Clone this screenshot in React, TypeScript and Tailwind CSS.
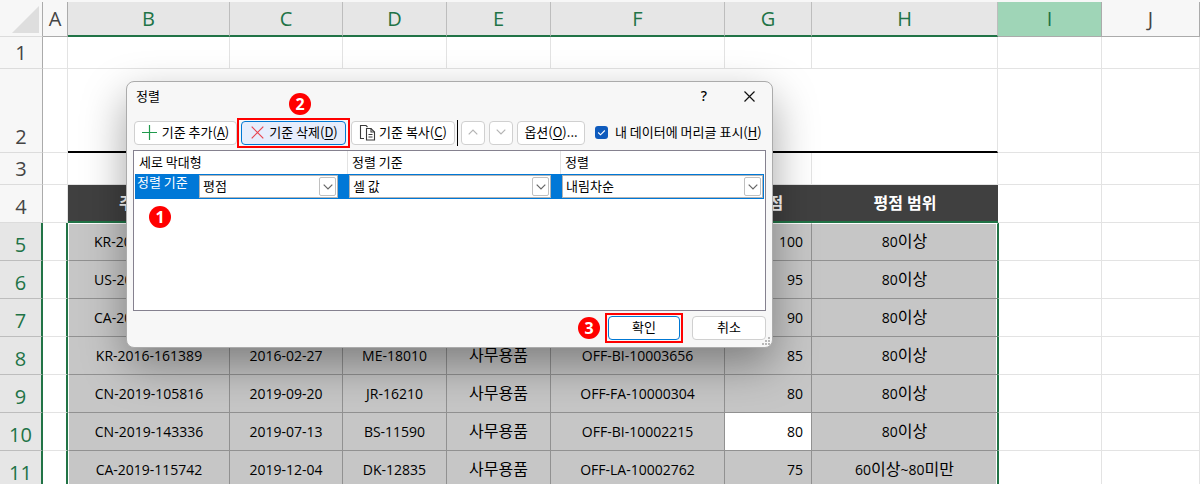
import { ReactNode } from "react";

type Row = {
  n: number;
  order: string;
  date?: string;
  customer?: string;
  category?: string;
  product?: string;
  score: string;
  range: string;
  active?: boolean;
};

const rows: Row[] = [
  { n: 5, order: "KR-20", score: "100", range: "80이상" },
  { n: 6, order: "US-20", score: "95", range: "80이상" },
  { n: 7, order: "CA-20", score: "90", range: "80이상" },
  { n: 8, order: "KR-2016-161389", date: "2016-02-27", customer: "ME-18010", category: "사무용품", product: "OFF-BI-10003656", score: "85", range: "80이상" },
  { n: 9, order: "CN-2019-105816", date: "2019-09-20", customer: "JR-16210", category: "사무용품", product: "OFF-FA-10000304", score: "80", range: "80이상" },
  { n: 10, order: "CN-2019-143336", date: "2019-07-13", customer: "BS-11590", category: "사무용품", product: "OFF-BI-10002215", score: "80", range: "80이상", active: true },
  { n: 11, order: "CA-2019-115742", date: "2019-12-04", customer: "DK-12835", category: "사무용품", product: "OFF-LA-10002762", score: "75", range: "60이상~80미만" },
];

/* Hangul runs are set larger than Latin runs so both scripts look even. */
function Mixed({ text }: { text?: string }) {
  const runs = (text ?? "").match(/[가-힣]+|[^가-힣]+/g) ?? [];
  return (
    <>
      {runs.map((run, i) => (
        <span key={i} className={/[가-힣]/.test(run) ? "text-base leading-5" : "text-sm leading-5"}>
          {run}
        </span>
      ))}
    </>
  );
}

function ColumnHead({ children, tone }: { children: ReactNode; tone: "plain" | "selected" | "hover" }) {
  const tones = {
    plain: "border-b border-[#ababab] bg-[#f7f7f7] text-[#444]",
    selected: "border-b-2 border-b-[#217346] border-r-[#bdbdbd] bg-[#e6e6e6] text-[#217346]",
    hover: "border-b border-[#ababab] bg-[#9fd5b7] text-[#217346]",
  };
  return <th scope="col" className={`h-[35px] border-r p-0 text-xl leading-6 font-normal ${tones[tone]}`}>{children}</th>;
}

function RowHead({ n, selected }: { n: number; selected?: boolean }) {
  return (
    <th
      scope="row"
      className={`border-b p-0 pb-[5px] align-bottom text-xl leading-5 font-normal ${
        selected
          ? "border-r-2 border-r-[#217346] border-b-[#bdbdbd] bg-[#e6e6e6] text-[#217346]"
          : "border-r border-r-[#ababab] border-b-[#dcdcdc] bg-[#f7f7f7] text-[#444]"
      }`}
    >
      {n}
    </th>
  );
}

const blank = "border-r border-b border-[#e3e3e3] p-0";

function Sheet() {
  return (
    <table className="w-full table-fixed border-separate border-spacing-0 border-t-2 border-[#f7f7f7] bg-white">
      <colgroup>
        <col className="w-[43px]" />
        <col className="w-[25px]" />
        <col className="w-[162px]" />
        <col className="w-[113px]" />
        <col className="w-[104px]" />
        <col className="w-[104px]" />
        <col className="w-[174px]" />
        <col className="w-[87px]" />
        <col className="w-[186px]" />
        <col className="w-[104px]" />
        <col />
      </colgroup>
      <thead>
        <tr>
          <td className="border-r border-b border-r-[#ababab] border-b-[#dcdcdc] bg-[#f7f7f7] p-0">
            <svg viewBox="0 0 27 27" className="ml-auto mr-[3px] size-[27px]" aria-hidden="true">
              <path d="M27 0V27H0Z" fill="#dedede" />
            </svg>
          </td>
          <ColumnHead tone="plain">A</ColumnHead>
          {["B", "C", "D", "E", "F", "G", "H"].map((c) => (
            <ColumnHead key={c} tone="selected">{c}</ColumnHead>
          ))}
          <ColumnHead tone="hover">I</ColumnHead>
          <ColumnHead tone="plain">J</ColumnHead>
        </tr>
      </thead>
      <tbody>
        <tr className="h-8">
          <RowHead n={1} />
          {Array.from({ length: 10 }, (_, i) => (
            <td key={i} className={blank} />
          ))}
        </tr>
        <tr className="h-[84px]">
          <RowHead n={2} />
          <td className={blank} />
          <td colSpan={7} className="border-r border-b-2 border-r-[#e3e3e3] border-b-black p-0" />
          <td className={blank} />
          <td className={blank} />
        </tr>
        <tr className="h-8">
          <RowHead n={3} />
          {Array.from({ length: 10 }, (_, i) => (
            <td key={i} className={blank} />
          ))}
        </tr>
        <tr className="h-[38px]">
          <RowHead n={4} />
          <td className={blank} />
          {["주", "", "", "", "", "평점", "평점 범위"].map((label, i) => (
            <td
              key={i}
              className={`border-b-2 border-[#217346] bg-[#404040] p-0 font-bold text-white ${i === 0 ? "pl-[51px] text-left" : "text-center"}`}
            >
              <span className="text-base leading-5">{label}</span>
            </td>
          ))}
          <td className={blank} />
          <td className={blank} />
        </tr>
        {rows.map((r, i) => {
          const top = i === 0 ? "border-t border-t-white" : "";
          const cell = `border-r border-b border-r-[#919191] border-b-[#919191] bg-[#c6c6c6] p-0 pb-[2px] text-center ${top}`;
          return (
            <tr key={r.n} className="h-[38px] text-black">
              <RowHead n={r.n} selected />
              <td className="border-r-2 border-b border-r-[#217346] border-b-[#e3e3e3] p-0" />
              <td
                className={`border-r border-b border-l border-r-[#919191] border-b-[#919191] border-l-white bg-[#c6c6c6] p-0 pb-[2px] ${top} ${
                  i < 3 ? "pl-[25px] text-left" : "text-center"
                }`}
              >
                <Mixed text={r.order} />
              </td>
              <td className={cell}><Mixed text={r.date} /></td>
              <td className={cell}><Mixed text={r.customer} /></td>
              <td className={cell}><Mixed text={r.category} /></td>
              <td className={cell}><Mixed text={r.product} /></td>
              <td
                className={`border-r border-b border-r-[#919191] border-b-[#919191] p-0 pr-2 pb-[2px] text-right ${top} ${
                  r.active ? "bg-white" : "bg-[#c6c6c6]"
                }`}
              >
                <Mixed text={r.score} />
              </td>
              <td className={`border-r border-b border-r-[#217346] border-b-[#919191] bg-[#c6c6c6] p-0 pb-[2px] text-center shadow-[inset_-1px_0_0_#fff] ${top}`}>
                <Mixed text={r.range} />
              </td>
              <td className="border-r border-b border-l border-[#e3e3e3] border-l-[#217346] p-0" />
              <td className={blank} />
            </tr>
          );
        })}
      </tbody>
    </table>
  );
}

function Badge({ n, place }: { n: number; place: string }) {
  return (
    <span
      className={`absolute flex size-[22px] items-center justify-center rounded-full bg-[#ff0000] font-['Noto_Sans',sans-serif] text-base leading-none font-bold text-white ${place}`}
    >
      {n}
    </span>
  );
}

const button = "flex h-6 shrink-0 items-center justify-center rounded-[4px] border border-[#d0d0d0] bg-white pb-[2px] whitespace-nowrap";

function Key({ children }: { children: string }) {
  return (
    <span>
      (<span className="underline underline-offset-2">{children}</span>)
    </span>
  );
}

function Chevron({ up, color }: { up?: boolean; color: string }) {
  return (
    <svg viewBox="0 0 10 6" className="h-[6px] w-[10px]" fill="none" stroke={color} strokeWidth="1.2" aria-hidden="true">
      <path d={up ? "M.7 5.3 5 1l4.3 4.3" : "M.7.7 5 5 9.3.7"} />
    </svg>
  );
}

function Combo({ label, value }: { label: string; value: string }) {
  return (
    <div className="relative h-[23px] min-w-0 flex-1">
      <select aria-label={label} className="h-full w-full appearance-none border border-[#b4b4b4] bg-white pb-[3px] pl-[3px] text-[13px] leading-5 text-black">
        <option>{value}</option>
      </select>
      <span className="pointer-events-none absolute inset-y-[2px] right-[2px] flex w-[17px] items-center justify-center rounded-[2px] border border-[#c0c0c0] bg-white">
        <Chevron color="#666" />
      </span>
    </div>
  );
}

function SortDialog() {
  return (
    <section
      role="dialog"
      aria-labelledby="sort-title"
      className="absolute top-[81px] left-[126px] flex w-[647px] flex-col rounded-[8px] border border-[#ababab] bg-[#f7f7f7] text-[13px] leading-5 text-black shadow-[0_17px_44px_rgba(0,0,0,0.36)]"
    >
      <header className="flex h-[29px] items-center pr-[17px] pb-px pl-[9px]">
        <h1 id="sort-title" className="flex-1">정렬</h1>
        <button type="button" aria-label="도움말" className="mr-[32px] w-4 font-['Noto_Sans',sans-serif] text-sm font-medium">?</button>
        <button type="button" aria-label="닫기">
          <svg viewBox="0 0 11 11" className="size-[11px]" stroke="#111" strokeWidth="1.2" aria-hidden="true">
            <path d="M.5.5l10 10M10.5.5l-10 10" />
          </svg>
        </button>
      </header>

      <div className="mt-[7px] flex h-[30px] items-center pl-[7px]">
        <button type="button" className={`${button} w-[103px] gap-[5px]`}>
          <svg viewBox="0 0 15 15" className="size-[15px]" stroke="#1f9a4c" strokeWidth="1.2" aria-hidden="true">
            <path d="M7.5 0v15M0 7.5h15" />
          </svg>
          <span>기준 추가<Key>A</Key></span>
        </button>
        <div className="shrink-0 border-2 border-[#ff0000] px-[2px] py-px">
          <button type="button" className="flex h-6 w-[105px] items-center justify-center gap-[5px] rounded-[4px] border border-[#0078d4] bg-[#e6edfc] pb-[2px] pl-[2px] whitespace-nowrap">
            <svg viewBox="0 0 13 13" className="size-[13px]" stroke="#e8434d" strokeWidth="1.2" aria-hidden="true">
              <path d="M.7.7l11.6 11.6M12.3.7.7 12.3" />
            </svg>
            <span>기준 삭제<Key>D</Key></span>
          </button>
        </div>
        <button type="button" className={`${button} ml-px w-[104px] gap-[3px]`}>
          <svg viewBox="0 0 17 17" className="size-[17px]" fill="none" stroke="#3b3b3b" strokeWidth="1.1" aria-hidden="true">
            <path d="M5 14.5H1.5V1.5H7L8.5 3" />
            <path d="M7.5 4.5H12l3.500 3.500v8h-8z" fill="#fff" />
            <path d="M12 4.500V8h3.500M9.500 10.500h4M9.500 13h4" />
          </svg>
          <span>기준 복사<Key>C</Key></span>
        </button>
        <span className="ml-[2px] h-[26px] w-px bg-black" />
        <button type="button" aria-label="위로 이동" className={`${button} ml-[3px] w-6`}><Chevron up color="#b4b4b4" /></button>
        <button type="button" aria-label="아래로 이동" className={`${button} ml-1 w-6`}><Chevron color="#b4b4b4" /></button>
        <button type="button" className={`${button} ml-1 w-[68px]`}><span>옵션<Key>O</Key>...</span></button>
        <label className="ml-[10px] flex items-center gap-[7px] pb-[2px] whitespace-nowrap">
          <span className="relative flex size-[13px]">
            <input type="checkbox" defaultChecked className="size-[13px] appearance-none rounded-[3px] bg-[#0f5bbd]" />
            <svg viewBox="0 0 13 13" className="pointer-events-none absolute inset-0" fill="none" stroke="#fff" strokeWidth="1.1" aria-hidden="true">
              <path d="M3.200 6.500 5.500 8.800 9.800 4.500" />
            </svg>
          </span>
          <span>내 데이터에 머리글 표시<Key>H</Key></span>
        </label>
      </div>

      <div className="mx-[6px] mt-[2px] h-[161px] border border-[#85818f] bg-white px-px">
        <div className="grid h-[23px] grid-cols-[213px_213px_1fr] leading-[22px]">
          <span className="border-r border-[#e3e3e3] pl-1">세로 막대형</span>
          <span className="border-r border-[#e3e3e3] pl-1">정렬 기준</span>
          <span className="pl-1">정렬</span>
        </div>
        <div className="grid h-[25px] grid-cols-[203px_213px_1fr] bg-[#0078d7] py-px">
          <div className="flex">
            <span className="-mt-px w-[64px] shrink-0 pl-[2px] leading-4 text-white">정렬 기준</span>
            <Combo label="세로 막대형" value="평점" />
          </div>
          <div className="flex pl-[11px]"><Combo label="정렬 기준" value="셀 값" /></div>
          <div className="flex pr-px pl-[11px]"><Combo label="정렬" value="내림차순" /></div>
        </div>
      </div>

      <footer className="flex h-[36px] items-start justify-end pt-[2px] pr-[6px]">
        <div className="border-2 border-[#ff0000] p-px">
          <button type="button" className="flex h-6 w-[72px] items-center justify-center rounded-[4px] border border-[#0078d4] bg-white pb-[2px]">확인</button>
        </div>
        <button type="button" className={`${button} mt-[3px] ml-[9px] w-[74px]`}>취소</button>
      </footer>

      <svg viewBox="0 0 8 8" className="absolute right-[2px] bottom-[2px] size-2" fill="#b8b8b8" aria-hidden="true">
        <path d="M6 0h2v2H6zM3 3h2v2H3zM6 3h2v2H6zM0 6h2v2H0zM3 6h2v2H3zM6 6h2v2H6z" />
      </svg>
      <Badge n={1} place="top-[124px] left-[22px]" />
      <Badge n={2} place="top-[11px] left-[162px]" />
      <Badge n={3} place="top-[235px] left-[451px]" />
    </section>
  );
}

export default function App() {
  return (
    <main className="relative h-screen overflow-hidden bg-white font-['Open_Sans','Noto_Sans_CJK_KR',sans-serif]">
      <Sheet />
      <div className="font-['Noto_Sans_CJK_KR',sans-serif]">
        <SortDialog />
      </div>
    </main>
  );
}
